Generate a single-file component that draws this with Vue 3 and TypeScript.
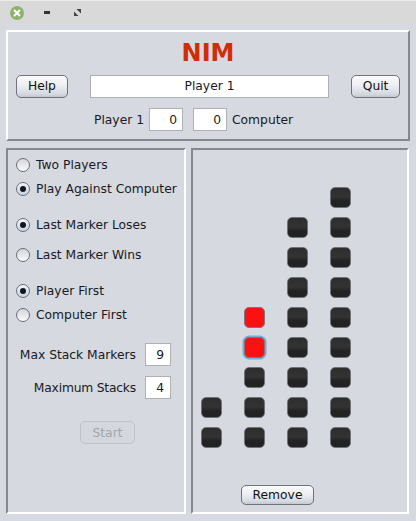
<script setup lang="ts">
const groups = [
  { cls: 'g1', items: [{ label: 'Two Players', on: false }, { label: 'Play Against Computer', on: true }] },
  { cls: 'g2', items: [{ label: 'Last Marker Loses', on: true }, { label: 'Last Marker Wins', on: false }] },
  { cls: 'g3', items: [{ label: 'Player First', on: true }, { label: 'Computer First', on: false }] },
]
const stacks = [
  { black: 2, red: 0 },
  { black: 3, red: 2 },
  { black: 8, red: 0 },
  { black: 9, red: 0 },
]
</script>

<template>
  <div class="window">
    <header class="titlebar">
      <span class="close">
        <svg width="8" height="8" viewBox="0 0 8 8"><path d="M1 1 7 7M7 1 1 7" stroke="#fff" stroke-width="2" /></svg>
      </span>
      <span class="min"></span>
      <svg class="max" width="7" height="7" viewBox="0 0 7 7">
        <path d="M2.5 0H7V4.500Z M0 2.500V7H4.500Z" fill="#444" />
      </svg>
    </header>
    <main class="content">
      <section class="panel raised top">
        <h1 class="title">NIM</h1>
        <div class="row-status">
          <button class="btn help">Help</button>
          <input class="field status" value="Player 1" readonly />
          <button class="btn quit">Quit</button>
        </div>
        <div class="row-score">
          <span>Player 1</span>
          <input class="field num score" value="0" readonly />
          <input class="field num score gap" value="0" readonly />
          <span>Computer</span>
        </div>
      </section>
      <div class="bottom">
        <aside class="panel lowered options">
          <div v-for="g in groups" :key="g.cls" class="group" :class="g.cls">
            <label v-for="it in g.items" :key="it.label" class="radio">
              <span class="dot" :class="{ on: it.on }"></span>
              <span>{{ it.label }}</span>
            </label>
          </div>
          <div class="setting s1">
            <span>Max Stack Markers</span>
            <input class="field num small" value="9" readonly />
          </div>
          <div class="setting s2">
            <span class="tight">Maximum Stacks</span>
            <input class="field num small" value="4" readonly />
          </div>
          <button class="btn start" disabled>Start</button>
        </aside>
        <section class="panel lowered board">
          <div class="stacks">
            <div v-for="(s, i) in stacks" :key="i" class="stack">
              <span
                v-for="n in s.red"
                :key="'r' + n"
                class="marker red"
                :class="{ focus: n === 2 }"
              ></span>
              <span v-for="n in s.black" :key="'b' + n" class="marker"></span>
            </div>
          </div>
          <button class="btn remove">Remove</button>
        </section>
      </div>
    </main>
  </div>
</template>

<style>
html, body { margin: 0; background: #d6d9e0; }
</style>

<style scoped>
.window {
  width: 416px;
  height: 521px;
  display: flex;
  flex-direction: column;
  background: #d6d9e0;
  font-family: "DejaVu Sans", sans-serif;
  font-size: 12.3px;
  color: #1a1a24;
  overflow: hidden;
  white-space: nowrap;
}
.titlebar {
  height: 24px;
  box-sizing: border-box;
  background: #d9d9d9;
  border-top: 1px solid #ececec;
  display: flex;
  align-items: center;
  padding-left: 10px;
}
.close {
  width: 14px;
  height: 14px;
  border-radius: 50%;
  background: #8fb26c;
  display: flex;
  align-items: center;
  justify-content: center;
}
.min {
  width: 6px;
  height: 3px;
  background: #333;
  margin-left: 20px;
}
.max { margin-left: 24px; }
.content {
  flex: 1;
  padding: 6px;
  display: flex;
  flex-direction: column;
  gap: 7px;
  min-height: 0;
}
.panel { box-sizing: border-box; border-style: solid; border-width: 2px; }
.raised { border-color: #fff #85878c #85878c #fff; }
.lowered { border-color: #85878c #fff #fff #85878c; }
.top {
  height: 111px;
  width: 404px;
  display: flex;
  flex-direction: column;
  align-items: stretch;
}
.title {
  margin: 6px 0 0;
  height: 35px;
  line-height: 30px;
  text-align: center;
  font-size: 24px;
  font-weight: 700;
  color: #d12c06;
  font-family: "DejaVu Sans", sans-serif;
}
.row-status {
  display: flex;
  align-items: center;
  padding: 0 8px;
  height: 24px;
  margin-top: 1px;
}
.btn {
  box-sizing: border-box;
  height: 23px;
  padding: 0;
  font: inherit;
  color: #111;
  border: 1px solid #70737a;
  border-radius: 5px;
  background: linear-gradient(#fbfbfc 0%, #eceef1 45%, #d5d9e1 85%, #c3c7cf 100%);
}
.help { width: 52px; }
.quit { width: 49px; margin-left: 22px; }
.field {
  box-sizing: border-box;
  border: 1px solid #aeb0b4;
  background: #fff;
  font: inherit;
  color: #1a1a24;
  padding: 0;
  outline: none;
  border-radius: 0;
}
.status {
  width: 240px;
  height: 23px;
  margin-left: 22px;
  text-align: center;
}
.row-score {
  display: flex;
  align-items: center;
  height: 23px;
  margin-top: 10px;
  padding-left: 86px;
}
.num { text-align: right; padding-right: 5px; }
.score { width: 34px; height: 23px; margin-left: 5px; }
.score.gap { margin-left: 10px; margin-right: 5px; }
.bottom {
  display: flex;
  gap: 5px;
  height: 366px;
}
.options {
  width: 180px;
  padding-left: 8px;
  display: flex;
  flex-direction: column;
}
.radio {
  display: flex;
  align-items: center;
  gap: 6px;
  height: 24px;
}
.g1 { margin-top: 3px; }
.g2 { margin-top: 12px; }
.g2 .radio + .radio { margin-top: 6px; }
.g3 { margin-top: 12px; }
.dot {
  box-sizing: border-box;
  width: 14px;
  height: 14px;
  border-radius: 50%;
  border: 1px solid #6b6e75;
  background: linear-gradient(#d2d5dc, #fbfbfc);
  display: flex;
  align-items: center;
  justify-content: center;
}
.dot.on { background: linear-gradient(#f4f5f7, #c3d3e6); }
.dot.on::after {
  content: "";
  width: 6px;
  height: 6px;
  border-radius: 50%;
  background: #15161c;
}
.setting {
  display: flex;
  align-items: center;
  justify-content: flex-end;
  gap: 9px;
  height: 23px;
  padding-right: 13px;
}
.tight { letter-spacing: -0.2px; }
.s1 { margin-top: 16px; }
.s2 { margin-top: 10px; }
.small { width: 26px; height: 23px; padding-right: 6px; }
.start {
  align-self: flex-start;
  width: 55px;
  margin: 22px 0 0 64px;
  color: #a3a5aa;
  border-color: #bfc2c8;
  background: #d4d7de;
}
.board {
  width: 218px;
  display: flex;
  flex-direction: column;
  align-items: stretch;
  padding-left: 8px;
}
.stacks {
  display: flex;
  gap: 22px;
  height: 298px;
  align-items: flex-end;
}
.stack {
  width: 21px;
  display: flex;
  flex-direction: column;
  gap: 9px;
}
.marker {
  width: 21px;
  height: 21px;
  box-sizing: border-box;
  border-radius: 5px;
  border: 1px solid #6f7277;
  background: linear-gradient(#2d2d2d 0%, #333 45%, #222 70%, #232323 100%);
}
.marker.red {
  background: #fb1111;
  border-color: #80757a;
}
.marker.focus { box-shadow: 0 0 0 1.5px #79a9d6; }
.remove {
  align-self: flex-start;
  width: 73px;
  height: 20px;
  margin: 37px 0 0 40px;
}
</style>
